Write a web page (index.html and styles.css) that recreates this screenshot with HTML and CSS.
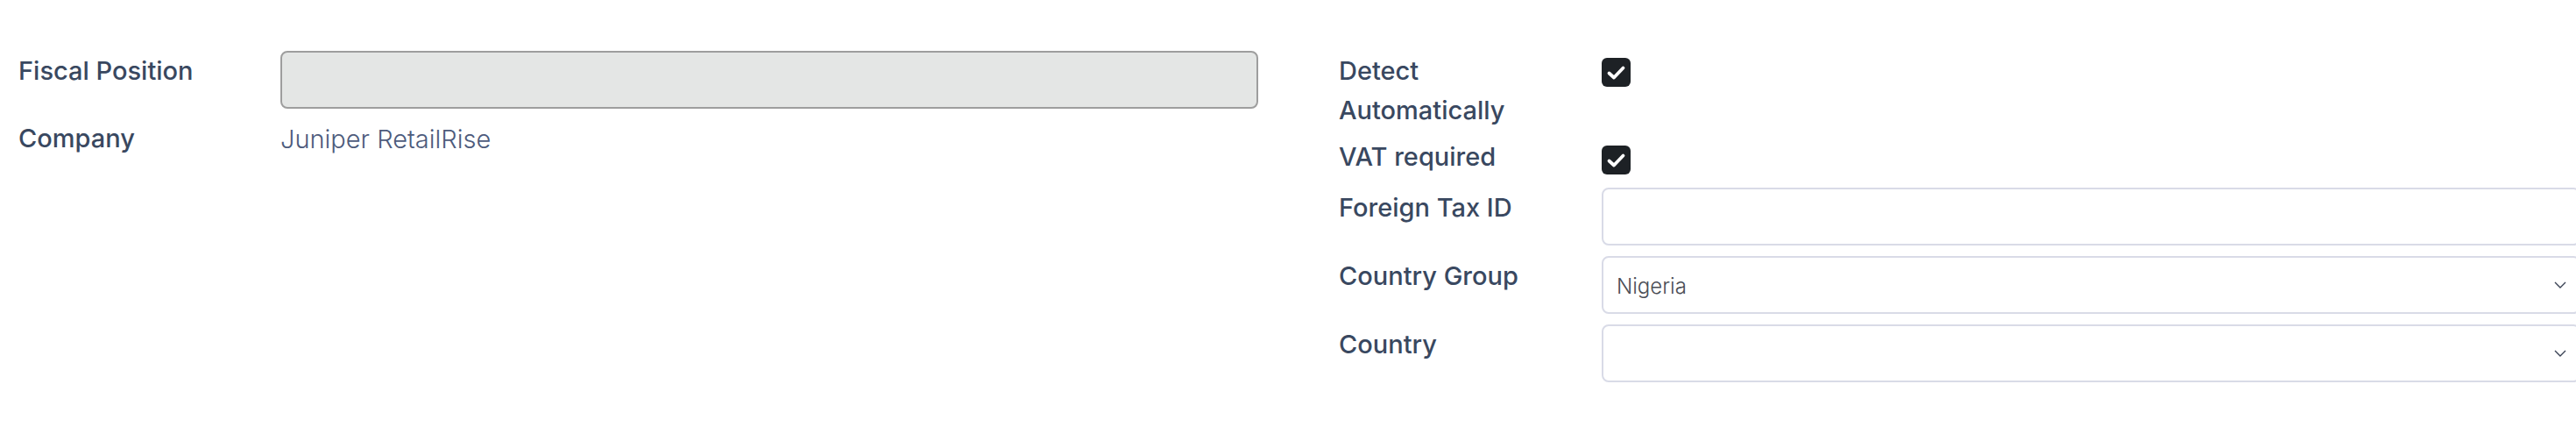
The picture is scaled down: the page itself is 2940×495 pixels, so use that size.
FILE: index.html
```html
<!DOCTYPE html>
<html lang="en">
<head>
<meta charset="utf-8">
<title>Fiscal Position</title>
<link rel="stylesheet" href="styles.css">
</head>
<body>
<div class="form">
  <div class="group group-left">
    <div class="row">
      <div class="label">Fiscal Position</div>
      <div class="field"><div class="input input-readonly"></div></div>
    </div>
    <div class="row row-company">
      <div class="label">Company</div>
      <div class="field value">Juniper RetailRise</div>
    </div>
  </div>
  <div class="group group-right">
    <div class="row">
      <div class="label">Detect<br>Automatically</div>
      <div class="field">
        <svg class="checkbox" width="33" height="33" viewBox="0 0 33 33"><rect x="0" y="0" width="33" height="33" rx="6" fill="#1d2125"/><path d="M8.5 17.5 L14 22.5 L24.5 11.5" fill="none" stroke="#ffffff" stroke-width="3.8" stroke-linecap="round" stroke-linejoin="round"/></svg>
      </div>
    </div>
    <div class="row row-vat">
      <div class="label">VAT required</div>
      <div class="field">
        <svg class="checkbox" width="33" height="33" viewBox="0 0 33 33"><rect x="0" y="0" width="33" height="33" rx="6" fill="#1d2125"/><path d="M8.5 17.5 L14 22.5 L24.5 11.5" fill="none" stroke="#ffffff" stroke-width="3.8" stroke-linecap="round" stroke-linejoin="round"/></svg>
      </div>
    </div>
    <div class="row row-input">
      <div class="label">Foreign Tax ID</div>
      <div class="field"><div class="input"></div></div>
    </div>
    <div class="row row-input">
      <div class="label">Country Group</div>
      <div class="field">
        <div class="input select">
          <span class="select-text">Nigeria</span>
          <svg class="chevron" width="14" height="8" viewBox="0 0 14 8"><path d="M1 1 L7 7 L13 1" fill="none" stroke="#3a4254" stroke-width="1.4"/></svg>
        </div>
      </div>
    </div>
    <div class="row row-input">
      <div class="label">Country</div>
      <div class="field">
        <div class="input select">
          <span class="select-text"></span>
          <svg class="chevron" width="14" height="8" viewBox="0 0 14 8"><path d="M1 1 L7 7 L13 1" fill="none" stroke="#3a4254" stroke-width="1.4"/></svg>
        </div>
      </div>
    </div>
  </div>
</div>
</body>
</html>
```

FILE: styles.css
```css
html, body {
  margin: 0;
  padding: 0;
  background: #ffffff;
  overflow: hidden;
}

body {
  font-family: "Inter", "Lato", "Liberation Sans", sans-serif;
  color: #394860;
}

.form {
  display: grid;
  grid-template-columns: 1415px 1417px;
  column-gap: 92px;
  padding: 58px 0 0 21px;
}

.group {
  display: flex;
  flex-direction: column;
}

.row {
  display: grid;
  grid-template-columns: 299px 1fr;
  align-items: start;
}

.group-right .row {
  grid-template-columns: 300px 1fr;
}

.label {
  font-size: 29px;
  font-weight: 500;
  line-height: 45px;
  color: #394860;
}

.row-company {
  margin-top: 11px;
}

.value {
  font-size: 29px;
  font-weight: 300;
  line-height: 45px;
  padding-top: 1px;
  color: #4d5b7c;
}

.input {
  box-sizing: border-box;
  height: 66px;
  border: 2px solid #d9dbe7;
  border-radius: 8px;
  background: #ffffff;
}

.input-readonly {
  border-color: #9e9e9e;
  background: #e4e6e5;
}

.checkbox {
  display: block;
  margin-top: 8px;
}

.row-vat {
  margin-top: 8px;
}

.row-vat .checkbox {
  margin-top: 10px;
}

.row-vat + .row-input {
  margin-top: 13px;
}

.row-input + .row-input {
  margin-top: 12px;
}

.select {
  display: flex;
  align-items: center;
  justify-content: space-between;
  padding: 0 14px 0 15px;
}

.select-text {
  font-size: 24px;
  font-weight: 300;
  color: #4a4d55;
  padding-top: 2px;
}

.chevron {
  display: block;
}
```
